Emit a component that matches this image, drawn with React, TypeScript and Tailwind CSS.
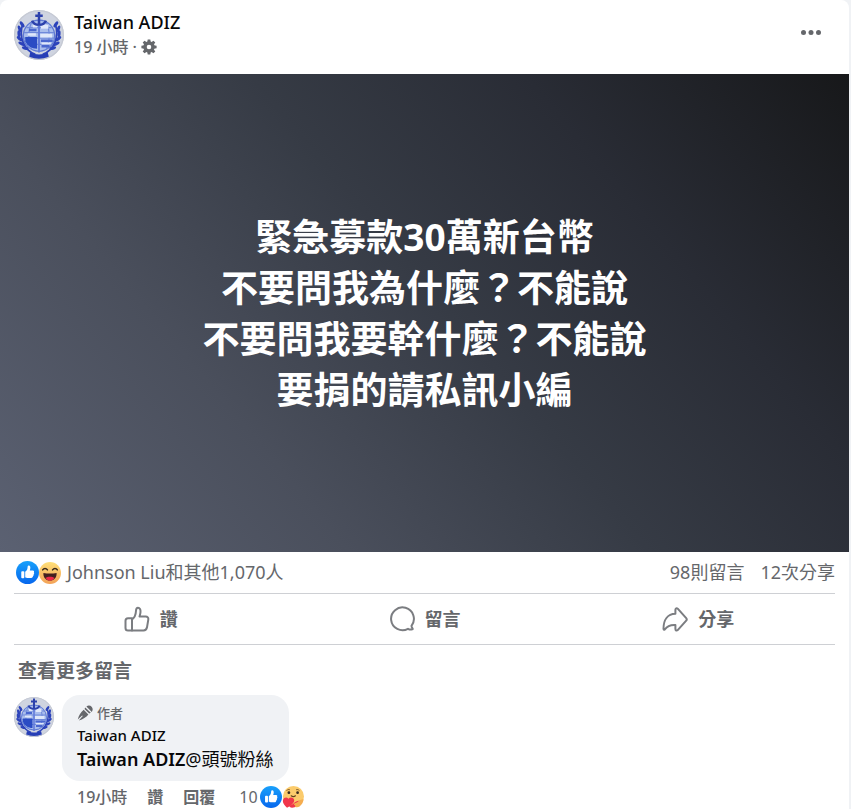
import { useId } from 'react';

function Avatar({ className }: { className: string }) {
  const id = useId();
  const leaves = [
    [13, 23, -35],
    [9, 30, -20],
    [8, 38, -5],
    [9, 46, -50],
    [12, 54, -60],
    [18, 61, -75],
  ];
  return (
    <svg viewBox="0 0 80 80" className={className} role="img" aria-label="Taiwan ADIZ">
      <defs>
        <clipPath id={id}>
          <circle cx="40" cy="40" r="40" />
        </clipPath>
      </defs>
      <g clipPath={`url(#${id})`}>
        <rect width="80" height="80" fill="#cfd4e0" />
        <circle cx="40" cy="41" r="26" fill="#a9bdec" />
        <circle cx="40" cy="41" r="25" fill="none" stroke="#5f79d2" strokeWidth="2" />
        <path d="M20 28h40M16 36h48M15 45h50M20 55h40M29 18c-7 14-7 32 0 46M51 18c7 14 7 32 0 46" fill="none" stroke="#6f89da" strokeWidth="2" />
        <path d="M18 43h19v19c-9 0-16-5-19-12z" fill="#2b4cc4" />
        <path d="M43 47h19v4H43zM44 56h13v4H44zM24 30h12v4H24z" fill="#4a67cf" />
        <path d="M43 23h12v7H43zM42 38h19v6H42zM22 37h13v4H22zM44 52h15v3H44zM30 23h7v5h-7z" fill="#e0e8fa" />
        <g fill="#2c43bb">
          {leaves.map(([x, y, angle]) => (
            <g key={y}>
              <ellipse cx={x} cy={y} rx="2.5" ry="5.5" transform={`rotate(${angle} ${x} ${y})`} />
              <ellipse cx={80 - x} cy={y} rx="2.5" ry="5.5" transform={`rotate(${-angle} ${80 - x} ${y})`} />
            </g>
          ))}
        </g>
        <path d="M14 22C7 44 16 64 34 71M66 22c7 22-2 42-20 49" fill="none" stroke="#2c43bb" strokeWidth="3" />
        <path d="M26 68c9 4 19 4 28 0l2 8c-10 4-22 4-32 0z" fill="#263eb6" />
        <path d="M40 3v22M34 9h12M29 17c3 9 19 9 22 0" fill="none" stroke="#2c41ac" strokeWidth="4" />
        <path d="M40 25v43" stroke="#607adb" strokeWidth="3" />
      </g>
      <circle cx="40" cy="40" r="39" fill="none" stroke="#c6cad4" strokeWidth="2" />
    </svg>
  );
}

function GearIcon() {
  return (
    <svg viewBox="0 0 16 16" className="size-4 text-[#65676b]" aria-hidden="true">
      <circle cx="8" cy="8" r="4" fill="none" stroke="currentColor" strokeWidth="3.4" />
      {[0, 45, 90, 135, 180, 225, 270, 315].map((angle) => (
        <path key={angle} d="M6.2 3.5 6.700.400h2.600l.5 3.100z" fill="currentColor" transform={`rotate(${angle} 8 8)`} />
      ))}
    </svg>
  );
}

function LikeBadge({ className }: { className: string }) {
  const id = useId();
  return (
    <svg viewBox="0 0 24 24" className={className} aria-hidden="true">
      <defs>
        <linearGradient id={id} x1="0" y1="0" x2="0" y2="1">
          <stop stopColor="#18a0fb" />
          <stop offset="1" stopColor="#0767ed" />
        </linearGradient>
      </defs>
      <circle cx="12" cy="12" r="12" fill={`url(#${id})`} />
      <rect x="5.5" y="10.6" width="3.2" height="7.4" rx="1" fill="#fff" />
      <path d="M9.6 17.2v-6c1.3-.8 2.2-2.1 2.4-3.8l.2-1.8c.1-.7.6-1 1.2-.9 1.4.2 1.8 1.8 1.5 3.2l-.5 2h3.2c1.1 0 1.6 1.1 1 1.9.6.6.5 1.5-.2 2 .3.8 0 1.600-.7 1.900.1 1.100-.6 2-1.900 2h-3.400c-1.300 0-2-.5-2.800-.5z" fill="#fff" />
    </svg>
  );
}

function HahaBadge({ className }: { className: string }) {
  const id = useId();
  return (
    <svg viewBox="0 0 24 24" className={className} aria-hidden="true">
      <defs>
        <linearGradient id={id} x1="0" y1="0" x2="0" y2="1">
          <stop stopColor="#ffdf78" />
          <stop offset="1" stopColor="#f3a257" />
        </linearGradient>
      </defs>
      <circle cx="12" cy="12" r="12" fill={`url(#${id})`} />
      <path d="M4.800 12c4.500.8 9.900.8 14.400 0 .3 4.400-2.200 8.300-7.200 8.300S4.500 16.400 4.800 12z" fill="#43201f" />
      <path d="M7 17.500c2.500-1.900 7.500-1.900 10 0-2.500 3.700-7.500 3.700-10 0z" fill="#ed2947" />
      <path d="M4 8.700c1.300-2.200 3.800-2.200 5.200 0M14.800 8.700c1.400-2.200 3.900-2.200 5.200 0" fill="none" stroke="#38291c" strokeWidth="1.600" strokeLinecap="round" />
    </svg>
  );
}

function CareBadge({ className }: { className: string }) {
  return (
    <svg viewBox="0 0 24 24" className={className} aria-hidden="true">
      <circle cx="12.500" cy="11.500" r="11.500" fill="#fbcb6c" />
      <path d="M5.200 4.800c.8-1 2-1.300 3-.8M15.800 4c1.200-.4 2.200 0 3 .8" stroke="#795422" strokeLinecap="round" fill="none" />
      <circle cx="7.500" cy="7.300" r="1.500" fill="#35281f" />
      <circle cx="17" cy="7.300" r="1.500" fill="#35281f" />
      <path d="M10 10.700c1.500 1.100 3.200 1.100 4.700 0" stroke="#61401d" strokeWidth="1.200" strokeLinecap="round" fill="none" />
      <path d="M5.500 23.800C2.500 20.800.200 18 1.200 15c.8-2.600 4-3.200 5.800-1.200 1.800-2 5.400-1.500 6.200 1 1 3.600-4 7.200-7.700 9z" fill="#f0364c" />
      <path d="M8 21c2 0 3.600-.8 4.900-2.200 1.500-1.700 4-2.900 6.100-2.600l.8 2.200c-1.500 3-5 5.200-8.800 5.200-2 0-3.400-.9-3-2.600z" fill="#f0364c" />
      <path d="M23.500 14.500c-2-.3-4.400.9-5.900 2.400-1.300 1.300-3.200 1.300-4.300 2.400-.7 1 0 1.800 1.200 1.600-.8 1.300.2 2.500 1.900 2.300 4-.4 6.600-4.300 7.100-8.700z" fill="#f5ad50" />
    </svg>
  );
}

function ThumbIcon() {
  return (
    <svg viewBox="0 0 26 26" className="size-[26px] text-[#7b7d81]" fill="none" stroke="currentColor" strokeWidth="2" strokeLinejoin="round" aria-hidden="true">
      <path d="M8 24.500V13.300c2.600-1.500 3.800-4.600 4-8.500.1-1.900.8-3 2-3 1.800 0 2.700 1.900 2.500 4.200-.1 1.600-.6 3.200-1 4.600h6.200c1.800 0 2.900 1.300 2.600 3l-1.300 7.700c-.4 2-1.500 3.200-3.500 3.200z" />
      <path d="M8 12.200H4c-1.600 0-2.500.9-2.500 2.500V22c0 1.600.9 2.500 2.500 2.500h4z" />
    </svg>
  );
}

function CommentIcon() {
  return (
    <svg viewBox="0 0 26 26" className="size-[26px] text-[#7b7d81]" fill="none" stroke="currentColor" strokeWidth="2" strokeLinejoin="round" aria-hidden="true">
      <path d="M22.500 19.800A11.400 11.400 0 1 0 19 22.800c1.200.7 3 .9 4.200.6.700-.2.600-.7.200-1.200-.5-.7-.8-1.500-.9-2.400z" />
    </svg>
  );
}

function ShareIcon() {
  return (
    <svg viewBox="0 0 26 26" className="size-[26px] text-[#7b7d81]" fill="none" stroke="currentColor" strokeWidth="2" strokeLinejoin="round" aria-hidden="true">
      <path d="M13.400 3.800c0-1.400 1.300-2 2.300-1.100l8.500 9.500c.7.800.7 1.700 0 2.500l-8.500 9.400c-1 1-2.300.4-2.300-1V19c-5-.3-8.300 1.100-10.400 4.300-.5.800-1.500.5-1.500-.5C1.500 14 5.500 8 13.400 7.800z" />
    </svg>
  );
}

function AuthorIcon() {
  return (
    <svg viewBox="0 0 16 16" className="size-4" fill="currentColor" aria-hidden="true">
      <path d="M9.400 1.400C11.200.2 13.300.400 14.600 1.700s1.500 3.400.2 5.200z" />
      <path d="M8.300 2.400l5.500 5.400-1.600.8-4.700-4.700zM6.700 4.700l4.700 4.700c-2.200 2.700-5.300 4.700-9.600 6l4-4.300-.7-.7-4.300 4c1-4.100 3-7.400 5.900-9.700z" />
    </svg>
  );
}

const actions = [
  { label: '讚', Icon: ThumbIcon },
  { label: '留言', Icon: CommentIcon },
  { label: '分享', Icon: ShareIcon },
];

export default function App() {
  return (
    <main className="bg-[#f0f2f5] pr-0.5 font-['Noto_Sans','Noto_Sans_CJK_TC',sans-serif] text-[#65676b]">
      <article className="rounded-t-lg bg-white">
        <header className="flex items-start justify-between px-3.5 pt-2.5 pb-3.5">
          <div className="flex gap-2.5">
            <Avatar className="size-[50px]" />
            <div>
              <h1 className="text-[18px] leading-6 font-medium text-[#080809]">
                <a href="#profile">Taiwan ADIZ</a>
              </h1>
              <div className="flex items-center gap-1 text-[16px] leading-[26px] font-medium">
                <a href="#post">19 小時</a>
                <span>·</span>
                <GearIcon />
              </div>
            </div>
          </div>
          <button type="button" aria-label="更多" className="mt-3 mr-3.5">
            <svg viewBox="0 0 20 20" className="size-5" fill="currentColor" aria-hidden="true">
              <circle cx="2.5" cy="10.5" r="2.5" />
              <circle cx="10" cy="10.5" r="2.5" />
              <circle cx="17.5" cy="10.5" r="2.5" />
            </svg>
          </button>
        </header>

        <div className="bg-linear-[50deg,#5b6172_0%,#4a4f5c_28%,#363b45_52%,#292c35_74%,#17181a_100%] px-4 py-[137px] text-center text-[37px] leading-[51px] font-bold text-white">
          <p>緊急募款30萬新台幣</p>
          <p>不要問我為什麼？不能說</p>
          <p>不要問我要幹什麼？不能說</p>
          <p>要捐的請私訊小編</p>
        </div>

        <div className="px-3.5">
          <div className="flex items-center justify-between border-b border-[#ced0d4] text-[18px] leading-[41px]">
            <a href="#reactions" className="flex items-center">
              <LikeBadge className="ml-0.5 size-[23px]" />
              <HahaBadge className="mr-1.5 size-[22px]" />
              <span>Johnson Liu和其他1,070人</span>
            </a>
            <div className="flex gap-4">
              <a href="#comments">98則留言</a>
              <a href="#shares">12次分享</a>
            </div>
          </div>

          <div className="flex border-b border-[#ced0d4]">
            {actions.map(({ label, Icon }) => (
              <button key={label} type="button" className="flex h-[50px] flex-1 items-center justify-center gap-2.5 text-[18px] font-bold">
                <Icon />
                {label}
              </button>
            ))}
          </div>

          <section id="comments">
            <button type="button" className="block px-1 pt-3 pb-2.5 text-[19px] leading-7 font-bold">
              查看更多留言
            </button>
            <div className="flex items-start gap-2">
              <Avatar className="mt-0.5 size-10" />
              <div>
                <div className="w-fit rounded-[18px] bg-[#f0f2f5] px-[15px] pt-2 pb-2.5">
                  <div className="flex items-center gap-1 text-[13px] leading-5 font-medium">
                    <AuthorIcon />
                    作者
                  </div>
                  <a href="#profile" className="block text-[15px] leading-6 font-medium text-[#080809]">Taiwan ADIZ</a>
                  <p className="text-[18px] leading-6 text-[#080809]">
                    <a href="#profile" className="font-semibold">Taiwan ADIZ</a>@頭號粉絲
                  </p>
                </div>
                <div className="flex items-center gap-5 pt-0.5 pl-[15px] text-[16px] leading-7 font-medium">
                  <a href="#comment">19小時</a>
                  <button type="button" className="font-bold">讚</button>
                  <button type="button" className="font-bold">回覆</button>
                  <a href="#comment-reactions" className="flex items-center pl-1 font-normal">
                    <span className="mr-0.5">10</span>
                    <LikeBadge className="size-[22px]" />
                    <CareBadge className="size-[22px]" />
                  </a>
                </div>
              </div>
            </div>
          </section>
        </div>
      </article>
    </main>
  );
}
